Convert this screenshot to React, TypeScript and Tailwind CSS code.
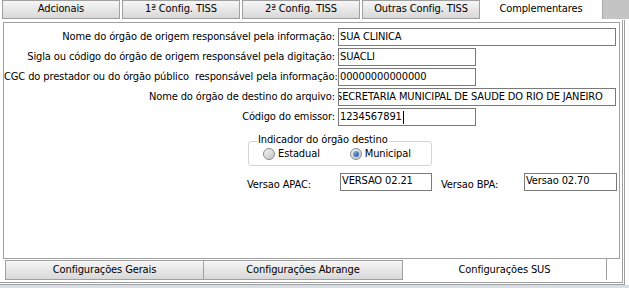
import React from "react";

const font = { fontFamily: '"DejaVu Sans Condensed", "Liberation Sans", Arial, sans-serif' };

const topTabs = ["Adcionais", "1ª Config. TISS", "2ª Config. TISS", "Outras Config. TISS"];

const rows = [
  { label: "Nome do órgão de origem responsável pela informação:", value: "SUA CLINICA", wide: true },
  { label: "Sigla ou código do órgão de origem responsável pela digitação:", value: "SUACLI", wide: false },
  { label: "CGC do prestador ou do órgão público  responsável pela informação:", value: "00000000000000", wide: false },
  { label: "Nome do órgão de destino do arquivo:", value: "SECRETARIA MUNICIPAL DE SAUDE DO RIO DE JANEIRO", wide: true },
  { label: "Código do emissor:", value: "1234567891", wide: false },
];

const Radio = ({ checked, label }: { checked?: boolean; label: string }) => (
  <div className="flex items-center gap-[3px]">
    <span className="w-[12px] h-[12px] rounded-full border border-[#8a8a8a] bg-gradient-to-br from-[#f4f4f4] to-[#c4c4c4] flex items-center justify-center">
      {checked && <span className="w-[6px] h-[6px] rounded-full bg-gradient-to-br from-[#8cc0ee] to-[#1c4f9a]" />}
    </span>
    <span>{label}</span>
  </div>
);

export default function App() {
  return (
    <div className="w-[629px] h-[288px] bg-white flex flex-col text-[11px] tracking-[-0.12px] text-black overflow-hidden" style={font}>
      {/* top tabs */}
      <div className="flex h-[20px] shrink-0">
        <div className="w-[2px]" />
        {topTabs.map((t) => (
          <div
            key={t}
            className="w-[118px] h-[19px] mr-[2px] border border-[#a0a0a0] bg-gradient-to-b from-[#f6f6f6] to-[#d8d8d8] flex items-center justify-center"
          >
            {t}
          </div>
        ))}
        <div className="w-[122px] h-[20px] -ml-[2px] bg-white flex items-center justify-center pb-[2px]">Complementares</div>
        <div className="flex-1 h-[19px] bg-[#c4c4c4] border-l border-[#a8a8a8]" />
      </div>

      <div className="w-[625px] h-[265px] shrink-0 border-r border-b border-[#a0a0a0] pr-[1px] pb-[1px]">
        <div className="h-full border-r border-b border-[#a0a0a0] pt-[2px] pl-[3px]">
          <div className="w-[617px] h-[237px] border border-[#a0a0a0] pt-[5px]">
            <div className="flex flex-col gap-[2px]">
              {rows.map((r) => (
                <div key={r.label} className="flex items-center h-[18px]">
                  <div className="w-[332px] text-right whitespace-pre pr-[1px]">{r.label}</div>
                  <div
                    className={`ml-[2px] h-[18px] border border-[#7a7a7a] px-[1px] leading-[15px] overflow-hidden whitespace-nowrap ${
                      r.wide ? "w-[278px]" : "w-[138px]"
                    }`}
                  >
                    {r.label.startsWith("Nome do órgão de destino") ? (
                      <span className="block -ml-[4px]">{r.value}</span>
                    ) : (
                      <span>
                        {r.value}
                        {r.value === "1234567891" && <span className="inline-block w-[1px] h-[13px] bg-black align-middle ml-[1px]" />}
                      </span>
                    )}
                  </div>
                </div>
              ))}
            </div>

            <div className="ml-[244px] mt-[15px] w-[184px] relative">
              <div className="absolute left-[9px] -top-[8px] px-[1px] bg-white leading-[14px]">Indicador do órgão destino</div>
              <div className="h-[25px] border border-[#d4d4d4] rounded-[3px] flex items-end gap-[30px] pl-[14px] pb-[3px]">
                <Radio label="Estadual" />
                <Radio checked label="Municipal" />
              </div>
            </div>

            <div className="flex items-start mt-[7px]">
              <div className="ml-[243px] w-[93px] pt-[4px]">Versao APAC:</div>
              <div className="w-[92px] h-[18px] border border-[#7a7a7a] px-[1px] leading-[13px]">VERSAO 02.21</div>
              <div className="ml-[9px] w-[83px] pt-[4px]">Versao BPA:</div>
              <div className="w-[93px] h-[18px] border border-[#7a7a7a] px-[1px] leading-[13px]">Versao 02.70</div>
            </div>
          </div>

          {/* bottom tabs */}
          <div className="flex mt-[1px] ml-[2px] h-[20px]">
            <div className="w-[199px] h-[20px] border border-[#a0a0a0] bg-gradient-to-b from-[#f6f6f6] to-[#d8d8d8] flex items-center justify-center">
              Configurações Gerais
            </div>
            <div className="w-[199px] h-[20px] border border-l-0 border-[#a0a0a0] bg-gradient-to-b from-[#f6f6f6] to-[#d8d8d8] flex items-center justify-center">
              Configurações Abrange
            </div>
            <div className="w-[204px] h-[21px] -mt-[1px] border-r border-[#a0a0a0] bg-white flex items-center justify-center pt-[2px]">
              Configurações SUS
            </div>
          </div>
        </div>
      </div>
      <div className="flex-1 bg-[#d8dee6]" />
    </div>
  );
}
